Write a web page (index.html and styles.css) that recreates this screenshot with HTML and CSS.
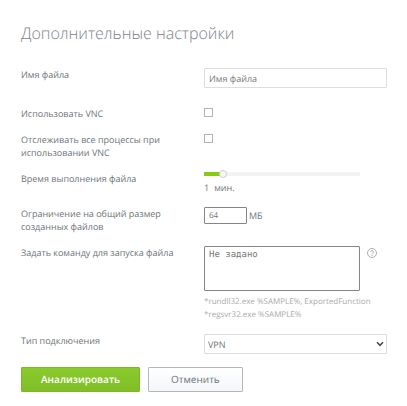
FILE: index.html
```html
<!DOCTYPE html>
<html lang="ru">
<head>
  <meta charset="UTF-8">
  <meta name="viewport" content="width=device-width, initial-scale=1.0">
  <title>Дополнительные настройки</title>
  <link rel="stylesheet" href="styles.css">
</head>
<body>
  <form class="settings">
    <h1 class="settings-title">Дополнительные настройки</h1>

    <div class="row row-name">
      <label for="file-name">Имя файла</label>
      <input type="text" id="file-name" class="text-input" placeholder="Имя файла">
    </div>

    <div class="row">
      <label for="use-vnc">Использовать VNC</label>
      <input type="checkbox" id="use-vnc" class="checkbox">
    </div>

    <div class="row">
      <label for="track-all">Отслеживать все процессы при использовании VNC</label>
      <input type="checkbox" id="track-all" class="checkbox">
    </div>

    <div class="row">
      <label for="run-time">Время выполнения файла</label>
      <div class="field">
        <input type="range" id="run-time" class="slider" min="0" max="10" value="1">
        <output class="slider-value" for="run-time"><span>1</span> <span>мин.</span></output>
      </div>
    </div>

    <div class="row">
      <label for="size-limit">Ограничение на общий размер созданных файлов</label>
      <div class="size-field">
        <input type="text" id="size-limit" class="size-input" value="64">
        <span>МБ</span>
      </div>
    </div>

    <div class="row">
      <label for="command">Задать команду для запуска файла</label>
      <div class="field">
        <div class="command-field">
          <textarea id="command" class="command-input" placeholder="Не задано"></textarea>
          <svg class="help-icon" viewBox="0 0 20 20" fill="none" stroke="currentColor">
            <circle cx="10" cy="10" r="9" stroke-width="1.6"/>
            <path d="M7.2 8a2.8 2.8 0 1 1 4.4 2.2C10.6 10.9 10 11.3 10 12.6" stroke-width="1.6"/>
            <circle cx="10" cy="14.8" r="1" fill="currentColor" stroke="none"/>
          </svg>
        </div>
        <div class="hint">*rundll32.exe %SAMPLE%, ExportedFunction<br>*regsvr32.exe %SAMPLE%</div>
      </div>
    </div>

    <div class="row">
      <label for="connection">Тип подключения</label>
      <div class="select-wrap">
        <select id="connection" class="select">
          <option>VPN</option>
        </select>
        <svg class="select-arrow" viewBox="0 0 8 6" fill="none" stroke="currentColor" stroke-width="1.6">
          <path d="M1 1.3L4 4.3L7 1.3"/>
        </svg>
      </div>
    </div>

    <div class="buttons">
      <button type="submit" class="btn btn-primary">Анализировать</button>
      <button type="button" class="btn">Отменить</button>
    </div>
  </form>
</body>
</html>
```
FILE: styles.css
```css
* {
  box-sizing: border-box;
}

body {
  margin: 0;
  background: #fff;
  color: #6b7378;
  font-family: "Open Sans", "Noto Sans", sans-serif;
  font-size: 9px;
  line-height: 13px;
  text-rendering: geometricPrecision;
}

input,
textarea,
select,
button {
  margin: 0;
  color: inherit;
  font: inherit;
  text-rendering: inherit;
}

.settings {
  padding: 20px 20px 15px 21px;
}

.settings-title {
  margin: 0 0 22px;
  color: #7a8287;
  font-size: 16px;
  font-weight: 300;
  line-height: 26px;
}

.row {
  display: grid;
  grid-template-columns: 1fr 1fr;
  align-items: start;
  margin-bottom: 13px;
}

.row-name {
  margin-bottom: 19px;
}

.text-input {
  width: 100%;
  height: 20px;
  padding: 0 4px;
  border: 1px solid #ddd;
  border-radius: 1px;
}

::placeholder {
  color: #777;
  opacity: 1;
}

.checkbox {
  appearance: none;
  width: 9px;
  height: 9px;
  margin-top: 1px;
  border: 1px solid #b3b3b3;
  background: #fff;
}

.checkbox:checked {
  background: #86c52a;
}

.field {
  display: flex;
  flex-direction: column;
}

.slider {
  appearance: none;
  width: 156px;
  height: 4px;
  background: none;
}

.slider::-webkit-slider-runnable-track {
  height: 4px;
  background: linear-gradient(to right, #86cc10 12%, #f3f3f3 12%);
}

.slider::-webkit-slider-thumb {
  appearance: none;
  width: 8px;
  height: 8px;
  margin-top: -2px;
  border: 1px solid #ccc;
  border-radius: 50%;
  background: #f8f8f8;
}

.slider-value {
  display: flex;
  gap: 5px;
  margin-top: 5px;
}

.size-field {
  display: flex;
  align-items: center;
  gap: 2px;
}

.size-input {
  width: 43px;
  height: 17px;
  padding: 0 4px;
  border: 1px solid #858585;
  border-radius: 1px;
  font-size: 8px;
}

.command-field {
  display: flex;
  align-items: flex-start;
  gap: 7px;
}

.command-input {
  width: 156px;
  height: 45px;
  padding: 2px 4px;
  border: 1px solid #858585;
  border-radius: 1px;
  font-family: "DejaVu Sans Mono", monospace;
  resize: none;
}

.help-icon {
  width: 10px;
  height: 10px;
  margin-top: 2px;
  color: #999;
}

.hint {
  margin-top: 4px;
  color: #aaa;
  font-size: 8px;
}

.select-wrap {
  position: relative;
}

.select {
  appearance: none;
  display: block;
  width: 100%;
  height: 20px;
  padding: 0 3px;
  border: 1px solid #ddd;
  border-radius: 1px;
  background: #fff;
}

.select-arrow {
  position: absolute;
  top: 7px;
  right: 3px;
  width: 8px;
  height: 6px;
  color: #444b50;
  pointer-events: none;
}

.buttons {
  display: flex;
  gap: 8px;
}

.btn {
  height: 25px;
  padding: 0 22px;
  border: 1px solid #b4b7ba;
  border-radius: 1px;
  background: linear-gradient(#fff, #f4f6f9);
  font-size: 10px;
}

.btn-primary {
  padding: 0 19px;
  border-color: #7bb726;
  background: linear-gradient(#8acb2c, #80bd27);
  color: #fff;
  font-weight: 600;
}
```
